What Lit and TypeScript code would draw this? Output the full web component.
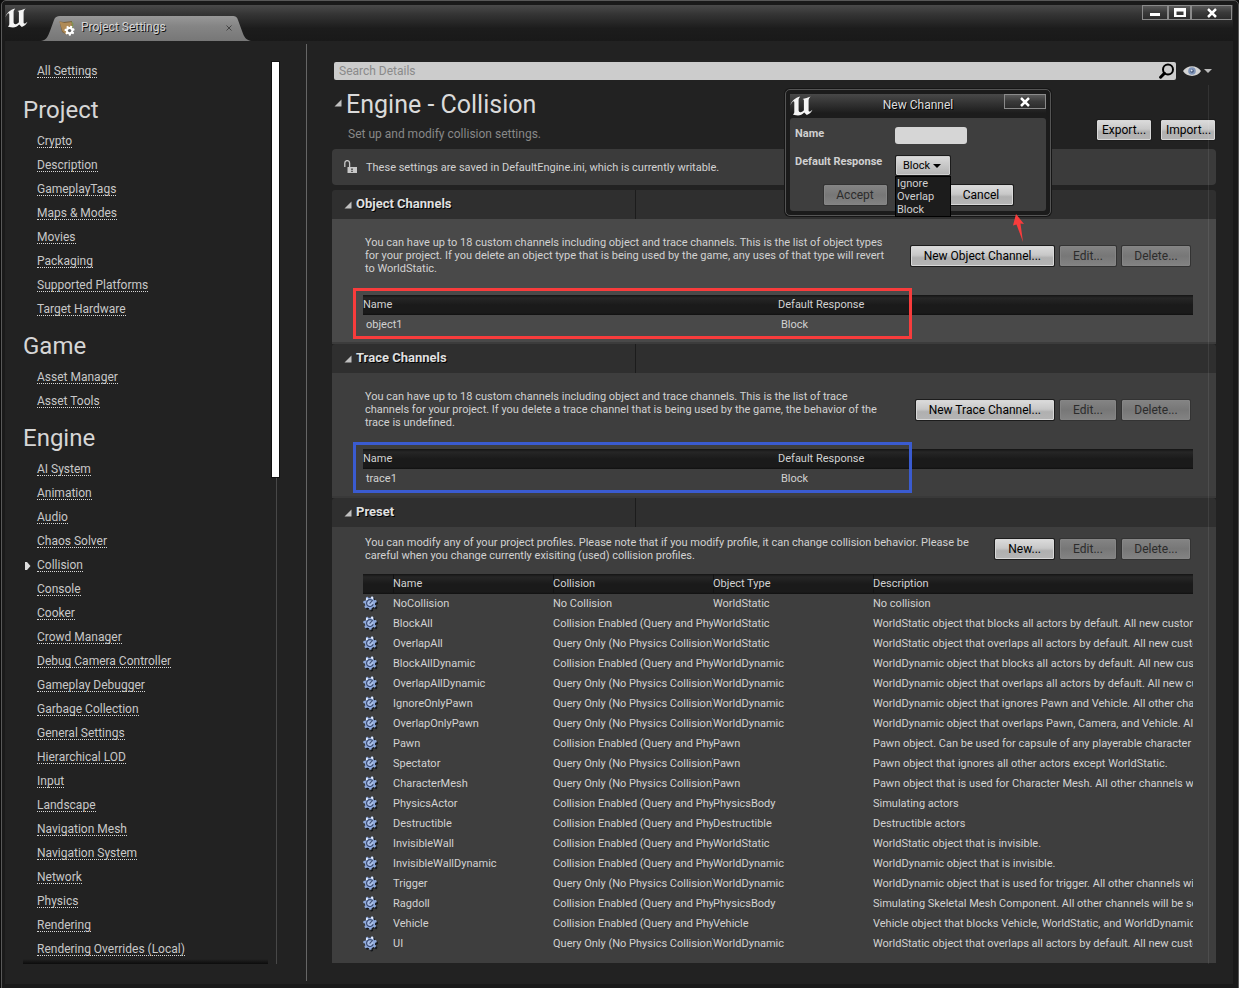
import { LitElement, html, css, svg, nothing } from "lit";
import { customElement, property } from "lit/decorators.js";

const NAV: { title: string; items: string[] }[] = [
  {
    title: "Project",
    items: ["Crypto", "Description", "GameplayTags", "Maps & Modes", "Movies", "Packaging", "Supported Platforms", "Target Hardware"],
  },
  { title: "Game", items: ["Asset Manager", "Asset Tools"] },
  {
    title: "Engine",
    items: [
      "AI System", "Animation", "Audio", "Chaos Solver", "Collision", "Console", "Cooker", "Crowd Manager",
      "Debug Camera Controller", "Gameplay Debugger", "Garbage Collection", "General Settings", "Hierarchical LOD",
      "Input", "Landscape", "Navigation Mesh", "Navigation System", "Network", "Physics", "Rendering",
      "Rendering Overrides (Local)",
    ],
  },
];

const ENABLED = "Collision Enabled (Query and Physics)";
const QUERY = "Query Only (No Physics Collision)";
const OWN = "All new custom channels will use its own default response.";
const REST = "All other channels will be set to default.";

const PRESETS: [string, string, string, string][] = [
  ["NoCollision", "No Collision", "WorldStatic", "No collision"],
  ["BlockAll", ENABLED, "WorldStatic", `WorldStatic object that blocks all actors by default. ${OWN}`],
  ["OverlapAll", QUERY, "WorldStatic", `WorldStatic object that overlaps all actors by default. ${OWN}`],
  ["BlockAllDynamic", ENABLED, "WorldDynamic", `WorldDynamic object that blocks all actors by default. ${OWN}`],
  ["OverlapAllDynamic", QUERY, "WorldDynamic", `WorldDynamic object that overlaps all actors by default. ${OWN}`],
  ["IgnoreOnlyPawn", QUERY, "WorldDynamic", `WorldDynamic object that ignores Pawn and Vehicle. ${REST}`],
  ["OverlapOnlyPawn", QUERY, "WorldDynamic", `WorldDynamic object that overlaps Pawn, Camera, and Vehicle. ${REST}`],
  ["Pawn", ENABLED, "Pawn", "Pawn object. Can be used for capsule of any playerable character or AI."],
  ["Spectator", QUERY, "Pawn", "Pawn object that ignores all other actors except WorldStatic."],
  ["CharacterMesh", QUERY, "Pawn", `Pawn object that is used for Character Mesh. ${REST}`],
  ["PhysicsActor", ENABLED, "PhysicsBody", "Simulating actors"],
  ["Destructible", ENABLED, "Destructible", "Destructible actors"],
  ["InvisibleWall", ENABLED, "WorldStatic", "WorldStatic object that is invisible."],
  ["InvisibleWallDynamic", ENABLED, "WorldDynamic", "WorldDynamic object that is invisible."],
  ["Trigger", QUERY, "WorldDynamic", `WorldDynamic object that is used for trigger. ${REST}`],
  ["Ragdoll", ENABLED, "PhysicsBody", `Simulating Skeletal Mesh Component. ${REST}`],
  ["Vehicle", ENABLED, "Vehicle", `Vehicle object that blocks Vehicle, WorldStatic, and WorldDynamic. ${REST}`],
  ["UI", QUERY, "WorldDynamic", `WorldStatic object that overlaps all actors by default. ${OWN}`],
];

const logo = html`<svg class="logo" width="23" height="20" viewBox="0 0 23 20" aria-hidden="true">
  <path fill="#f4f4f4" d="M0.3 9.2C1.6 5 5 1.6 10.2 0.4L9.2 1.9C8.7 2.7 8.6 3.2 8.6 4.2V14.2C8.6 15.6 10 16.6 11.4 16C12.6 15.5 13.4 14.9 13.9 14.2V4.6C13.9 3.6 13.4 3.2 12.5 3.1C15.2 2.6 17.8 1.6 20.6 0.4C19.2 1.8 18.6 2.8 18.6 4.4V14.4C18.6 15.6 19.6 15.8 20.6 15.2L22.4 13.8C21.4 16.2 19.6 18 16.8 19L14.2 16.6C12.4 18.6 10.4 19.4 8 19.4C5.4 19.4 3 18.4 3 18.4C4 17.8 4.3 17 4.3 15.8V6.4C4.3 5.2 3.6 4.9 2.6 5.8C1.7 6.7 1.1 7.8 0.3 9.2Z"/>
</svg>`;

const closeGlyph = html`<svg width="12" height="10" viewBox="0 0 12 10" aria-hidden="true">
  <path d="M2 1L10 9M10 1L2 9" stroke="#000" stroke-width="4" opacity=".5"/>
  <path d="M2 1L10 9M10 1L2 9" stroke="#fff" stroke-width="2.6"/>
</svg>`;

const teeth = (n: number, c: number, w: number) =>
  Array.from({ length: n }, (_, i) => svg`<rect x=${c - w / 2} y="0.2" width=${w} height="4" rx="0.8" transform="rotate(${(i * 360) / n + 22} ${c} ${c})"/>`);

const gear = html`<svg width="16" height="16" viewBox="0 0 16 16" aria-hidden="true">
  <g fill="#17191d" transform="translate(1.4 1.6)">${teeth(7, 7, 2.6)}<circle cx="7" cy="7" r="4.8"/></g>
  <g fill="#8fa9dc">${teeth(7, 7, 2.6)}<circle cx="7" cy="7" r="5.2"/></g>
  <path d="M3 3L5 3.4M8.8 0.8L9.6 3" stroke="#e8efff" stroke-width="1.8"/>
  <path d="M9.8 5.2A3.4 3.4 0 1 0 10.2 8.2" fill="#a9bfe8" stroke="#3c4d74" stroke-width="1.2"/>
  <path d="M8.8 5.2L6.6 7.6" stroke="#3c4d74" stroke-width="1.1"/>
</svg>`;

const expander = html`<svg class="expander" width="8" height="8" viewBox="0 0 8 8" aria-hidden="true"><path d="M7.5 0.5V7.5H0.5Z" fill="#c0c0c0"/></svg>`;

const shared = css`
  * {
    box-sizing: border-box;
  }
  button {
    font: 12px/18px Roboto, sans-serif;
    height: 20px;
    padding: 0 4px;
    color: #000;
    white-space: nowrap;
    background: linear-gradient(#dadada, #c8c8c8 45%, #b0b0b0 60%, #b4b4b4);
    border: 1px solid #d8d8d8;
    border-radius: 1px;
    box-shadow: 0 0 0 1px #1c1c1c;
  }
  button:disabled {
    color: #2c2c2c;
    background: linear-gradient(#838383, #777 50%, #828282);
    border-color: #858585;
    box-shadow: 0 0 0 1px #333;
  }
  .frame-btn {
    display: flex;
    align-items: center;
    justify-content: center;
    height: 15px;
    padding: 0;
    background: linear-gradient(#5a5a5a, #3a3a3a 50%, #2c2c2c);
    border: 1px solid #8a8a8a;
    border-radius: 0;
    box-shadow: none;
  }
`;

@customElement("channel-section")
class ChannelSection extends LitElement {
  @property() heading = "";
  @property({ attribute: false }) lines: string[] = [];
  @property() action = "";
  @property() mark = "";
  @property() entry = "";
  @property({ type: Boolean, reflect: true }) hot = false;
  @property({ type: Boolean, reflect: true }) preset = false;

  static styles = [
    shared,
    css`
      :host {
        display: block;
      }
      .head {
        display: flex;
        height: 29px;
        background: #2f2f2f;
        border-radius: 3px 3px 0 0;
      }
      h2 {
        display: flex;
        align-items: center;
        gap: 4px;
        width: 304px;
        margin: 0;
        padding: 0 0 2px 12px;
        border-right: 1px solid #1c1c1c;
        font: bold 13px/16px Roboto, sans-serif;
        color: #e0e0e0;
        text-shadow: 1px 1px 0 #000;
      }
      .expander {
        margin-top: 2px;
      }
      .body {
        padding: 17px 23px 7px 31px;
        background: #3e3e3e;
        border-bottom: 2px solid #393939;
      }
      :host([hot]) .body {
        background: #494949;
        border-bottom-color: #3c3c3c;
      }
      :host([preset]) .body {
        padding: 9px 23px 9px 31px;
        border-bottom: 0;
      }
      .intro {
        display: flex;
        align-items: center;
        gap: 6px;
        padding: 0 3px 0 2px;
        margin-bottom: 20px;
      }
      :host([preset]) .intro {
        margin-bottom: 12px;
      }
      p {
        flex: 1;
        margin: 0;
        white-space: nowrap;
      }
      .edit {
        width: 56px;
      }
      .delete {
        width: 68px;
      }
      .new {
        padding: 0 12px;
      }
      .grid {
        position: relative;
      }
      table {
        width: 100%;
        table-layout: fixed;
        border-collapse: collapse;
      }
      th,
      td {
        height: 20px;
        padding: 0;
        font-weight: normal;
        text-align: left;
        white-space: nowrap;
        overflow: hidden;
        line-height: 16px;
      }
      thead tr {
        background: linear-gradient(#141414, #262626 15%, #1a1a1a 50%, #1a1a1a 90%, #101010);
      }
      .presets th + th {
        box-shadow: inset 1px 0 0 #121212;
      }
      .channels td {
        padding-left: 3px;
      }
      .icon {
        width: 30px;
      }
      .col {
        width: 160px;
      }
      td svg {
        display: block;
      }
      .mark {
        position: absolute;
        left: -10px;
        top: -7px;
        width: calc(50% + 144px);
        height: 51px;
        border: 3px solid #f83c3c;
        pointer-events: none;
      }
      .mark.blue {
        border-color: #3a5bd0;
      }
    `,
  ];

  private channelTable() {
    return html`<table class="channels">
      <thead><tr><th>Name</th><th>Default Response</th></tr></thead>
      <tbody><tr><td>${this.entry}</td><td>Block</td></tr></tbody>
    </table>`;
  }

  private presetTable() {
    return html`<table class="presets">
      <thead>
        <tr><th class="icon"></th><th class="col">Name</th><th class="col">Collision</th><th class="col">Object Type</th><th>Description</th></tr>
      </thead>
      <tbody>
        ${PRESETS.map((r) => html`<tr><td>${gear}</td>${r.map((c) => html`<td>${c}</td>`)}</tr>`)}
      </tbody>
    </table>`;
  }

  render() {
    return html`
      <div class="head"><h2>${expander}${this.heading}</h2></div>
      <div class="body">
        <div class="intro">
          <p>${this.lines.map((l, i) => html`${i ? html`<br />` : nothing}${l}`)}</p>
          <button class="new">${this.action}</button>
          <button class="edit" disabled>Edit...</button>
          <button class="delete" disabled>Delete...</button>
        </div>
        <div class="grid">
          ${this.preset ? this.presetTable() : this.channelTable()}
          ${this.mark ? html`<div class="mark ${this.mark}"></div>` : nothing}
        </div>
      </div>
    `;
  }
}

@customElement("channel-dialog")
class ChannelDialog extends LitElement {
  static styles = [
    shared,
    css`
      :host {
        display: block;
        box-sizing: border-box;
        width: 266px;
        padding: 4px;
        background: #1b1b1b;
        border: 1px solid #555;
        border-radius: 5px;
        box-shadow: 0 0 0 1px #161616;
        color: #d0d0d0;
      }
      header {
        display: grid;
        grid-template-columns: 42px 1fr 42px;
        align-items: start;
        height: 24px;
        background: linear-gradient(#484848, #1c1c1c 80%);
      }
      .logo {
        margin-top: 2px;
      }
      h3 {
        margin: 0;
        text-align: center;
        font: 12px/22px Roboto, sans-serif;
        color: #ddd;
        text-shadow: 1px 1px 0 #000;
      }
      .panel {
        display: grid;
        grid-template-columns: 100px 1fr;
        padding: 3px 5px 6px;
        background: #3e3e3e;
        border-radius: 3px;
      }
      label {
        padding-top: 6px;
        font-weight: bold;
      }
      .field {
        height: 28px;
        display: flex;
        align-items: center;
      }
      input {
        width: 72px;
        height: 17px;
        border: 0;
        border-radius: 3px;
        background: #d6d6d6;
      }
      .pick {
        position: relative;
        padding: 7px 0 0 1px;
        height: 36px;
      }
      select {
        appearance: none;
        display: block;
        width: 54px;
        height: 19px;
        padding: 0 0 0 6px;
        font: 11px/17px Roboto, sans-serif;
        color: #000;
        background: linear-gradient(#dadada, #b4b4b4);
        border: 1px solid #d0d0d0;
        border-radius: 1px;
        box-shadow: 0 0 0 1px #1c1c1c;
      }
      .caret {
        position: absolute;
        left: 38px;
        top: 15px;
      }
      .menu {
        position: absolute;
        z-index: 1;
        left: 0;
        top: 27px;
        width: 56px;
        margin: 0;
        padding: 0 0 0 1px;
        list-style: none;
        background: #1c1c1c;
        border: 1px solid #000;
        line-height: 13px;
      }
      .actions {
        grid-column: 1 / -1;
        display: flex;
        justify-content: center;
        gap: 63px;
      }
      .actions button {
        width: 63px;
      }
    `,
  ];

  render() {
    return html`
      <header>
        ${logo}
        <h3>New Channel</h3>
        <button class="frame-btn" aria-label="Close">${closeGlyph}</button>
      </header>
      <div class="panel">
        <label for="name">Name</label>
        <div class="field"><input id="name" type="text" /></div>
        <label for="response">Default Response</label>
        <div class="pick">
          <select id="response">
            <option>Block</option>
            <option>Ignore</option>
            <option>Overlap</option>
          </select>
          <svg class="caret" width="8" height="4" viewBox="0 0 8 4" aria-hidden="true"><path d="M0 0H8L4 4Z" fill="#000" /></svg>
          <ul class="menu">
            <li>Ignore</li>
            <li>Overlap</li>
            <li>Block</li>
          </ul>
        </div>
        <div class="actions">
          <button disabled>Accept</button>
          <button>Cancel</button>
        </div>
      </div>
    `;
  }
}

@customElement("app-root")
class AppRoot extends LitElement {
  static styles = [
    shared,
    css`
      :host {
        display: block;
        font: 11px/13px Roboto, sans-serif;
        color: #d2d2d2;
        background: #0c0c0c;
      }
      .window {
        position: relative;
        display: flex;
        flex-direction: column;
        min-height: 100vh;
        padding: 4px 5px 4px 3px;
        margin-left: 1px;
        background: #1a1a1a;
        border: 1px solid #585858;
        border-radius: 5px 5px 0 0;
      }
      .titlebar {
        display: flex;
        align-items: flex-start;
        height: 36px;
        background: linear-gradient(#4a4a4a, #353535 25%, #1c1c1c 65%, #191919);
      }
      .titlebar > .logo {
        margin-top: 3px;
      }
      .tab {
        position: relative;
        display: flex;
        align-items: center;
        width: 210px;
        height: 25px;
        margin: 11px 0 0 13px;
        padding: 0 17px 2px 18px;
        color: #d6d6d6;
        font-size: 12px;
        line-height: 16px;
        text-shadow: 1px 1px 0 #111;
      }
      .tab-shape {
        position: absolute;
        inset: 0;
      }
      .tab > :not(.tab-shape) {
        position: relative;
      }
      .tab .title {
        flex: 1;
        margin-left: 5px;
        padding-bottom: 2px;
      }
      .tab-close {
        display: flex;
        width: 10px;
        height: 10px;
        padding: 2px;
        background: none;
        border: 0;
        box-shadow: none;
      }
      .controls {
        display: flex;
        margin-left: auto;
        margin-right: 1px;
      }
      .min {
        width: 26px;
      }
      .max {
        width: 23px;
      }
      .x {
        width: 41px;
      }
      .content {
        flex: 1;
        display: flex;
        background: #222;
      }
      .side {
        flex: none;
        display: flex;
        width: 302px;
        margin: 3px 0;
        padding: 18px 27px 17px 18px;
        border-right: 1px solid #666;
      }
      nav {
        flex: 1;
      }
      nav::after {
        content: "";
        display: block;
        height: 5px;
        margin-top: -2px;
        background: linear-gradient(#222, #0c0c0c);
      }
      nav h2 {
        margin: 0;
        padding-top: 6px;
        font: 24px/38px Roboto, sans-serif;
        color: #d6d6d6;
      }
      .item {
        display: flex;
        align-items: center;
        height: 24px;
        padding-top: 1px;
      }
      .all .item {
        height: 18px;
        margin-bottom: 5px;
      }
      .item .slot {
        display: flex;
        width: 14px;
        padding-left: 2px;
      }
      nav a {
        font-size: 12px;
        line-height: 12px;
        color: #c8c8c8;
        text-decoration: none;
        border-bottom: 1px dotted #d8d8d8;
      }
      .track {
        width: 7px;
        margin-left: 4px;
        background: linear-gradient(#484848, #484848) 4px 0 / 1px 100% no-repeat;
      }
      .thumb {
        height: 415px;
        background: #fff;
        box-shadow: 0 0 0 1px #111;
      }
      .main {
        position: relative;
        flex: 1;
        min-width: 0;
        padding: 21px 17px 20px 25px;
      }
      .main::after {
        content: "";
        position: absolute;
        top: 44px;
        bottom: 20px;
        right: 24px;
        border-right: 1px solid rgba(255, 255, 255, 0.08);
        pointer-events: none;
      }
      .search {
        display: flex;
        align-items: center;
        gap: 7px;
        padding-left: 2px;
      }
      .box {
        flex: 1;
        display: flex;
        align-items: center;
        height: 18px;
        padding-right: 1px;
        background: #ccc;
        border-radius: 2px;
      }
      .box input {
        flex: 1;
        height: 18px;
        padding: 0 5px;
        border: 0;
        background: none;
        font: 12px/18px Roboto, sans-serif;
      }
      .box input::placeholder {
        color: #8a8a8a;
      }
      .view {
        display: flex;
        align-items: center;
        gap: 3px;
        height: 18px;
        margin-right: 4px;
        padding: 0;
        background: none;
        border: 0;
        box-shadow: none;
      }
      .top {
        display: flex;
        align-items: flex-end;
        justify-content: space-between;
        padding: 9px 1px 6px 2px;
      }
      h1 {
        display: flex;
        align-items: center;
        gap: 4px;
        margin: 0;
        font: 25px/32px Roboto, sans-serif;
        color: #dadada;
      }
      h1 .expander {
        margin-bottom: 4px;
      }
      .sub {
        margin: 4px 0 0 14px;
        font-size: 12px;
        line-height: 18px;
        color: #888;
      }
      .io {
        display: flex;
        gap: 10px;
        margin-bottom: 3px;
      }
      .io button {
        width: 54px;
      }
      .notice {
        display: flex;
        align-items: center;
        gap: 9px;
        height: 36px;
        margin-bottom: 5px;
        padding-left: 12px;
        background: #3b3b3b;
        border-radius: 4px;
      }
      channel-dialog {
        position: absolute;
        right: 187px;
        top: 88px;
      }
      .arrow {
        position: absolute;
        right: 212px;
        top: 213px;
      }
    `,
  ];

  private link(name: string) {
    return html`<div class="item">
      <span class="slot">
        ${name === "Collision"
          ? html`<svg width="6" height="8" viewBox="0 0 6 8" aria-hidden="true"><path d="M0 0H2L5.5 4L2 8H0Z" fill="#ddd" /></svg>`
          : nothing}
      </span>
      <a href="#">${name}</a>
    </div>`;
  }

  render() {
    return html`
      <div class="window">
        <div class="titlebar">
          ${logo}
          <div class="tab">
            <svg class="tab-shape" width="210" height="25" viewBox="0 0 210 25" aria-hidden="true">
              <defs>
                <linearGradient id="tab" x1="0" y1="0" x2="0" y2="1">
                  <stop offset="0" stop-color="#989898" />
                  <stop offset=".4" stop-color="#858585" />
                  <stop offset="1" stop-color="#777" />
                </linearGradient>
              </defs>
              <path fill="url(#tab)" d="M0 25C6 24 7 20 9 15L13 4C14 1 16 0 19 0H191C195 0 196 1 197 4L201 15C203 21 205 24 210 25Z" />
            </svg>
            <svg width="17" height="16" viewBox="0 0 17 16" aria-hidden="true">
              <path d="M0.5 1.5L5 2L13 1V9L8 15L3 12Z" fill="#7d6440" />
              <path d="M0.5 1.5L5.5 3L13 2L12 9L7 14L3.4 11Z" fill="#b08b57" />
              <path d="M12 2L14 3.4L13 8" fill="none" stroke="#7c9440" />
              <g fill="#fff" transform="translate(5.4 5.4) scale(.74)">${teeth(7, 7, 3)}<circle cx="7" cy="7" r="5" /></g>
              <circle cx="10.6" cy="10.6" r="1.7" fill="#666" />
            </svg>
            <span class="title">Project Settings</span>
            <button class="tab-close" aria-label="Close tab">
              <svg width="6" height="6" viewBox="0 0 6 6" aria-hidden="true"><path d="M0.5 0.5L5.5 5.5M5.5 0.5L0.5 5.5" stroke="#444" /></svg>
            </button>
          </div>
          <div class="controls">
            <button class="frame-btn min" aria-label="Minimize">
              <svg width="12" height="9" viewBox="0 0 12 9" aria-hidden="true"><rect x="1" y="5" width="10" height="3" fill="#fff" /></svg>
            </button>
            <button class="frame-btn max" aria-label="Maximize">
              <svg width="12" height="9" viewBox="0 0 12 9" aria-hidden="true"><path d="M0 0H12V9H0ZM2.5 3.5V7H9.5V3.5Z" fill="#fff" fill-rule="evenodd" /></svg>
            </button>
            <button class="frame-btn x" aria-label="Close">${closeGlyph}</button>
          </div>
        </div>

        <div class="content">
          <div class="side">
            <nav>
              <div class="all">${this.link("All Settings")}</div>
              ${NAV.map((g) => html`<h2>${g.title}</h2>${g.items.map((i) => this.link(i))}`)}
            </nav>
            <div class="track"><div class="thumb"></div></div>
          </div>

          <div class="main">
            <div class="search">
              <div class="box">
                <input type="text" placeholder="Search Details" aria-label="Search Details" />
                <svg width="16" height="16" viewBox="0 0 16 16" aria-hidden="true">
                  <circle cx="9" cy="6.6" r="5" fill="none" stroke="#000" stroke-width="2" />
                  <path d="M5.4 10.4L1.6 14.2" stroke="#000" stroke-width="3" stroke-linecap="round" />
                </svg>
              </div>
              <button class="view" aria-label="View options">
                <svg width="18" height="12" viewBox="0 0 18 12" aria-hidden="true">
                  <path d="M0 6C4 -0.5 14 -0.5 18 6C14 12.5 4 12.5 0 6Z" fill="#d4d4d4" />
                  <circle cx="9" cy="6" r="3.8" fill="#7f94b8" />
                  <circle cx="9" cy="6" r="1.8" fill="#3f5273" />
                  <circle cx="8.6" cy="5.4" r="1" fill="#dde6f5" />
                </svg>
                <svg width="8" height="4" viewBox="0 0 8 4" aria-hidden="true"><path d="M0 0H8L4 4Z" fill="#bbb" /></svg>
              </button>
            </div>

            <div class="top">
              <div>
                <h1>${expander}Engine - Collision</h1>
                <p class="sub">Set up and modify collision settings.</p>
              </div>
              <div class="io"><button>Export...</button><button>Import...</button></div>
            </div>

            <div class="notice">
              <svg width="13" height="14" viewBox="0 0 13 14" aria-hidden="true">
                <path d="M0.8 7V3A2.4 2.4 0 0 1 5.6 3V7" fill="none" stroke="#c8c8c8" stroke-width="1.3" />
                <path d="M3.5 7H13V13H3.5Z" fill="#c8c8c8" />
                <path d="M8 8.4V10M8 10.8V12" stroke="#333" stroke-width="1.4" />
              </svg>
              <span>These settings are saved in DefaultEngine.ini, which is currently writable.</span>
            </div>

            <channel-section
              hot
              heading="Object Channels"
              action="New Object Channel..."
              mark="red"
              entry="object1"
              .lines=${[
                "You can have up to 18 custom channels including object and trace channels. This is the list of object types",
                "for your project. If you delete an object type that is being used by the game, any uses of that type will revert",
                "to WorldStatic.",
              ]}
            ></channel-section>
            <channel-section
              heading="Trace Channels"
              action="New Trace Channel..."
              mark="blue"
              entry="trace1"
              .lines=${[
                "You can have up to 18 custom channels including object and trace channels. This is the list of trace",
                "channels for your project. If you delete a trace channel that is being used by the game, the behavior of the",
                "trace is undefined.",
              ]}
            ></channel-section>
            <channel-section
              preset
              heading="Preset"
              action="New..."
              .lines=${[
                "You can modify any of your project profiles. Please note that if you modify profile, it can change collision behavior. Please be",
                "careful when you change currently exisiting (used) collision profiles.",
              ]}
            ></channel-section>
          </div>
        </div>

        <channel-dialog></channel-dialog>
        <svg class="arrow" width="14" height="28" viewBox="0 0 14 28" aria-hidden="true">
          <path d="M4 0L12 10L8.5 9.5L11 28L4.5 10.5L1 11.5Z" fill="#f83c3c" />
        </svg>
      </div>
    `;
  }
}
